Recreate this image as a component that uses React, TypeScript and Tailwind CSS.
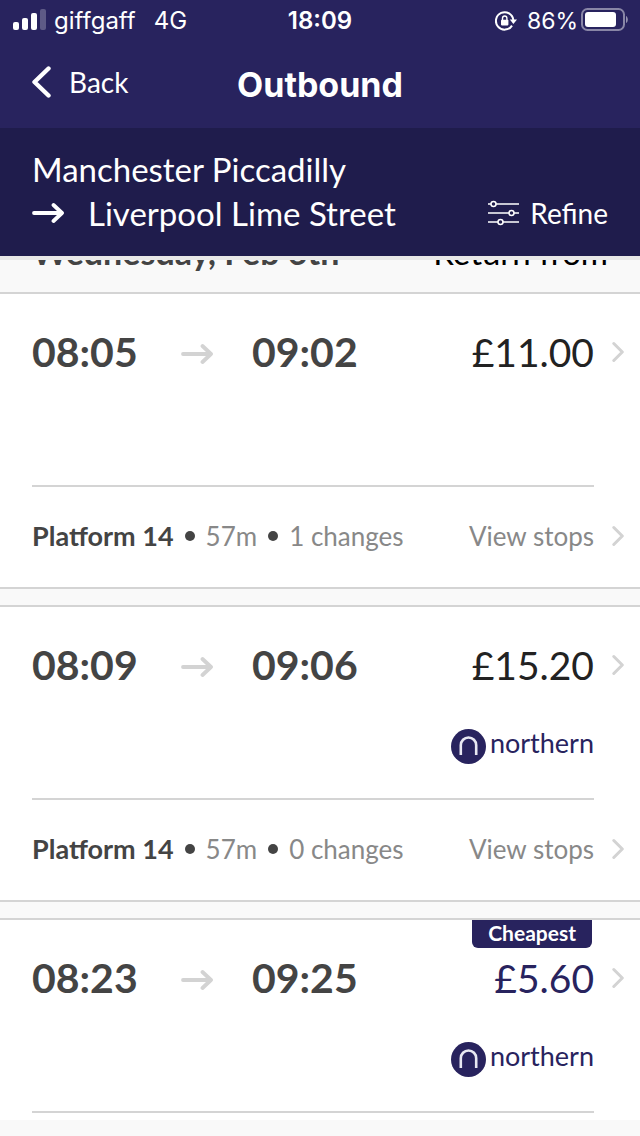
type Journey = {
  departs: string;
  arrives: string;
  price: string;
  changes?: string;
  northern?: boolean;
  cheapest?: boolean;
};

const journeys: Journey[] = [
  { departs: "08:05", arrives: "09:02", price: "£11.00", changes: "1 changes" },
  { departs: "08:09", arrives: "09:06", price: "£15.20", changes: "0 changes", northern: true },
  { departs: "08:23", arrives: "09:25", price: "£5.60", northern: true, cheapest: true },
];

function Arrow({ className }: { className: string }) {
  return (
    <svg className={className} width="32" height="22" viewBox="0 0 32 22" fill="none" stroke="currentColor" strokeWidth="3.8" strokeLinecap="round" strokeLinejoin="round" aria-hidden="true">
      <path d="M2 11H29M21.5 3L30 11L21.5 19" />
    </svg>
  );
}

function Chevron() {
  return (
    <svg className="shrink-0 text-[#d3d3d3]" width="12" height="22" viewBox="0 0 12 22" fill="none" stroke="currentColor" strokeWidth="3" strokeLinecap="round" strokeLinejoin="round" aria-hidden="true">
      <path d="M1.8 2.5L10.3 11L1.8 19.5" />
    </svg>
  );
}

function NorthernLogo() {
  return (
    <div className="flex items-center gap-1 text-[#28235e]">
      <svg width="35" height="35" viewBox="0 0 35 35" fill="none" aria-hidden="true">
        <circle cx="17.5" cy="17.5" r="17.5" fill="currentColor" />
        <path d="M9.8 26V16.2a7.7 7.7 0 0 1 15.4 0V26" stroke="#e8e8f2" strokeWidth="2.6" />
      </svg>
      <span className="pb-1.5 text-[27px] leading-8">northern</span>
    </div>
  );
}

function StatusBar() {
  return (
    <div className="grid h-10 grid-cols-3 items-center px-3 pt-0.5 font-[Inter,sans-serif] text-2xl">
      <div className="flex items-center">
        <svg className="mb-1" width="34" height="22" viewBox="0 0 34 22" fill="currentColor" aria-hidden="true">
          <rect x="1" y="14" width="6" height="8" rx="2" />
          <rect x="10" y="10" width="6" height="12" rx="2" />
          <rect x="19" y="5" width="6" height="17" rx="2" />
          <rect x="28" y="1" width="6" height="21" rx="2" opacity="0.25" />
        </svg>
        <span className="ml-2">giffgaff</span>
        <span className="ml-[18px]">4G</span>
      </div>
      <span className="text-center font-semibold">18:09</span>
      <div className="flex items-center justify-end">
        <svg className="mr-2.5" width="22" height="20" viewBox="0 0 22 20" fill="none" stroke="currentColor" strokeWidth="2" aria-hidden="true">
          <path d="M17 14.6A8.7 8.7 0 1 1 18.3 9" />
          <path d="M14.8 8.6H22L18.4 13Z" fill="currentColor" stroke="none" />
          <rect x="6" y="8.8" width="7.4" height="5.6" rx="0.8" fill="currentColor" stroke="none" />
          <path d="M7.5 9.4V7.2a2.2 2.2 0 0 1 4.4 0V9.4" strokeWidth="1.4" />
        </svg>
        <span className="text-[23px]">86%</span>
        <svg className="mb-0.5 ml-0.5" width="48" height="24" viewBox="0 0 48 24" aria-hidden="true">
          <rect x="2" y="1" width="42" height="21" rx="5.5" fill="none" stroke="white" strokeOpacity="0.45" strokeWidth="2" />
          <rect x="5" y="4" width="31" height="15" rx="3" fill="white" />
          <path d="M46 8c2.4 1 2.4 6 0 7Z" fill="white" fillOpacity="0.5" />
        </svg>
      </div>
    </div>
  );
}

function JourneyCard({ journey }: { journey: Journey }) {
  return (
    <li className="relative border-t-2 border-[#d4d4d4] bg-white">
      {journey.cheapest && (
        <span className="absolute right-12 top-0 rounded-b-md bg-[#28235e] px-4 pb-0.5 text-[21px] font-bold leading-[26px] text-white">
          Cheapest
        </span>
      )}
      <div className="h-[191px] pl-8 pr-4 pt-[26px]">
        <a href="#journey" className="flex h-16 items-center">
          <span className="w-[149px] text-[41px] font-bold text-[#444]">{journey.departs}</span>
          <Arrow className="mt-1 text-[#d3d3d3]" />
          <span className="ml-[39px] text-[41px] font-bold text-[#444]">{journey.arrives}</span>
          <span className={journey.cheapest ? "ml-auto mr-[18px] text-[39px] text-[#28235e]" : "ml-auto mr-[18px] text-[39px] text-[#222]"}>
            {journey.price}
          </span>
          <Chevron />
        </a>
        {journey.northern && (
          <div className="mr-[30px] mt-[30px] flex justify-end">
            <NorthernLogo />
          </div>
        )}
      </div>
      <div className="ml-8 mr-[46px] h-0.5 bg-[#d4d4d4]" />
      {journey.changes ? (
        <div className="flex h-[102px] items-center border-b-2 border-[#d4d4d4] pb-0.5 pl-8 pr-4 text-[26px] text-[#888]">
          <span className="text-[27px] font-bold text-[#444]">Platform 14</span>
          <span className="mx-[11px] size-2.5 rounded-full bg-[#444]" />
          <span>57m</span>
          <span className="mx-[11px] size-2.5 rounded-full bg-[#444]" />
          <span>{journey.changes}</span>
          <a href="#stops" className="ml-auto flex items-center gap-[18px]">
            View stops
            <Chevron />
          </a>
        </div>
      ) : (
        <div className="h-[7px]" />
      )}
    </li>
  );
}

export default function App() {
  return (
    <div className="min-h-screen bg-[#f9f9f9] font-[Lato,sans-serif]">
      <header className="text-white">
        <div className="h-32 bg-[#28235e]">
          <StatusBar />
          <div className="grid h-[88px] grid-cols-[1fr_auto_1fr] items-center px-8">
            <button type="button" className="flex items-center gap-[18px] pb-1 text-left text-[28px]">
              <svg width="19" height="32" viewBox="0 0 19 32" fill="none" stroke="currentColor" strokeWidth="4.4" strokeLinecap="round" strokeLinejoin="round" aria-hidden="true">
                <path d="M16.5 2.5L2.5 16L16.5 29.5" />
              </svg>
              Back
            </button>
            <h1 className="font-[Inter,sans-serif] text-[34px] font-bold">Outbound</h1>
          </div>
        </div>
        <div className="flex h-32 items-end justify-between bg-[#1f1c4c] px-8 pb-[21px]">
          <div className="text-[33px] leading-[44px]">
            <div>Manchester Piccadilly</div>
            <div className="flex items-center gap-6">
              <Arrow className="text-white" />
              <span>Liverpool Lime Street</span>
            </div>
          </div>
          <button type="button" className="flex items-center gap-2.5 text-[28px] leading-[44px]">
            <svg width="32" height="26" viewBox="0 0 32 26" fill="none" stroke="currentColor" strokeWidth="1.5" aria-hidden="true">
              <path d="M0 4H3M8 4H31M0 13H21M26 13H31M0 22H10M15 22H31" />
              <circle cx="5.5" cy="4" r="2.5" />
              <circle cx="23.5" cy="13" r="2.5" />
              <circle cx="12.5" cy="22" r="2.5" />
            </svg>
            Refine
          </button>
        </div>
      </header>
      <main>
        <div className="h-1 bg-[#e8e8e8]" />
        <div className="flex h-8 items-end justify-between overflow-hidden px-8 pb-5 text-[33px] leading-10">
          <span className="text-[34px] font-bold text-[#444]">Wednesday, Feb 6th</span>
          <span className="text-black">Return from</span>
        </div>
        <ul className="flex flex-col gap-4">
          {journeys.map((journey) => (
            <JourneyCard key={journey.departs} journey={journey} />
          ))}
        </ul>
      </main>
    </div>
  );
}
